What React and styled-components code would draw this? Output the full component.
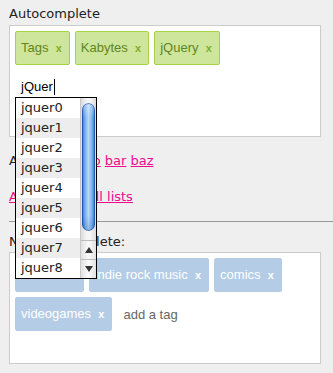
import React from "react";
import styled, { createGlobalStyle, css } from "styled-components";

const GlobalStyle = createGlobalStyle`
  html, body { margin: 0; padding: 0; background: #efefef; }
  body { font-family: "DejaVu Sans", Verdana, sans-serif; font-size: 13px; color: #222; }
`;

const Page = styled.div`
  padding: 5px 0 0 9px;
  width: 324px;
`;

const Label = styled.label`
  display: block;
  line-height: 17px;
  margin-bottom: ${(p) => p.$gap || 3}px;
`;

const Section = styled.div`
  position: relative;
`;

const TagsBox = styled.div`
  width: 300px;
  height: 100px;
  padding: 5px;
  border: 1px solid #ccc;
  background: #fff;
  display: flex;
  flex-wrap: wrap;
  align-content: flex-start;
`;

const greenTag = css`
  background: #cde69c;
  border: 1px solid #a5d24a;
  color: #638421;
`;
const blueTag = css`
  background: #b4cce5;
  border: 1px solid #b4cce5;
  color: #fff;
`;

const Tag = styled.span`
  ${(p) => (p.$tone === "blue" ? blueTag : greenTag)}
  border-radius: 2px;
  padding: 5px 7px 5px 5px;
  margin: 0 5px 5px 0;
  font-family: "Liberation Sans", Arial, sans-serif;
  font-size: 13px;
  line-height: 21px;
  white-space: pre;
`;

const Remove = styled.a`
  font-weight: bold;
  font-size: 11px;
  color: ${(p) => (p.$tone === "blue" ? "#fff" : "#82ad2b")};
  text-decoration: none;
`;

const TagInput = styled.span`
  display: inline-flex;
  align-items: center;
  width: 80px;
  padding: 5px;
  border: 1px solid transparent;
  margin: 0 5px 5px 0;
  font-family: "Liberation Sans", Arial, sans-serif;
  font-size: 13px;
  line-height: 21px;
  color: ${(p) => (p.$placeholder ? "#666" : "#000")};
`;

const Caret = styled.span`
  display: inline-block;
  width: 1px;
  height: 16px;
  background: #000;
  margin-left: 1px;
`;

const Dropdown = styled.div`
  position: absolute;
  left: 6px;
  top: 72px;
  width: 80px;
  border: 1px solid #000;
  background: #fff;
  display: flex;
  z-index: 10;
`;

const List = styled.ul`
  list-style: none;
  margin: 0;
  padding: 0;
  flex: 1;
`;

const Item = styled.li`
  height: 20px;
  line-height: 20px;
  padding-left: 5px;
  background: ${(p) => (p.$odd ? "#ededed" : "#fff")};
  color: #222;
  font-size: 13px;
`;

const Scrollbar = styled.div`
  width: 15px;
  display: flex;
  flex-direction: column;
  background: linear-gradient(to right, #dcdcdc, #f6f6f6 40%, #f6f6f6 60%, #dcdcdc);
  border-left: 1px solid #c8c8c8;
`;

const Track = styled.div`
  flex: 1;
  padding: 5px 1px 0;
`;

const Thumb = styled.div`
  height: 128px;
  border-radius: 7px;
  background:
    linear-gradient(to bottom, rgba(255,255,255,0.35), rgba(255,255,255,0) 12%, rgba(255,255,255,0) 88%, rgba(0,40,120,0.2)),
    linear-gradient(to right, #2c6fd4, #79b4f0 25%, #b5d8fb 50%, #79b4f0 75%, #2c6fd4);
  box-shadow: inset 0 0 0 1px rgba(20, 70, 160, 0.6);
`;

const Arrow = styled.div`
  height: 18px;
  border-top: 1px solid #bbb;
  background: linear-gradient(to right, #e2e2e2, #fafafa 50%, #e2e2e2);
  display: flex;
  align-items: center;
  justify-content: center;
  &::after {
    content: "";
    border-left: 4px solid transparent;
    border-right: 4px solid transparent;
    ${(p) =>
      p.$dir === "up"
        ? "border-bottom: 6px solid #333;"
        : "border-top: 6px solid #333;"}
  }
`;

const Para = styled.p`
  margin: ${(p) => p.$top}px 0 0;
  line-height: 17px;
`;

const Link = styled.a`
  color: #ee0a8c;
  text-decoration: underline;
`;

const Rule = styled.hr`
  margin: 16px 0 11px;
  border: 0;
  border-top: 1px solid #999;
  height: 0;
`;

const green = ["Tags", "Kabytes", "jQuery"];
const blue = ["movies", "indie rock music", "comics", "videogames"];

export default function App() {
  return (
    <>
      <GlobalStyle />
      <Page>
        <Label>Autocomplete</Label>
        <Section>
          <TagsBox>
            {green.map((t) => (
              <Tag key={t}>
                {t}{"\u00a0\u00a0"}<Remove>x</Remove>
              </Tag>
            ))}
            <TagInput>
              jQuer<Caret />
            </TagInput>
          </TagsBox>
          <Dropdown>
            <List>
              {Array.from({ length: 9 }, (_, i) => (
                <Item key={i} $odd={i % 2 === 1}>
                  jquer{i}
                </Item>
              ))}
            </List>
            <Scrollbar>
              <Track>
                <Thumb />
              </Track>
              <Arrow $dir="up" />
              <Arrow $dir="down" />
            </Scrollbar>
          </Dropdown>
        </Section>
        <Para $top={15}>
          Add a tag: <Link>foo</Link> <Link>bar</Link> <Link>baz</Link>
        </Para>
        <Para $top={19}>
          <Link>Add tags to all lists</Link>
        </Para>
        <Rule />
        <Label $gap={2}>No autocomplete:</Label>
        <TagsBox>
          {blue.map((t) => (
            <Tag key={t} $tone="blue">
              {t}{"\u00a0\u00a0"}<Remove $tone="blue">x</Remove>
            </Tag>
          ))}
          <TagInput $placeholder>add a tag</TagInput>
        </TagsBox>
      </Page>
    </>
  );
}
